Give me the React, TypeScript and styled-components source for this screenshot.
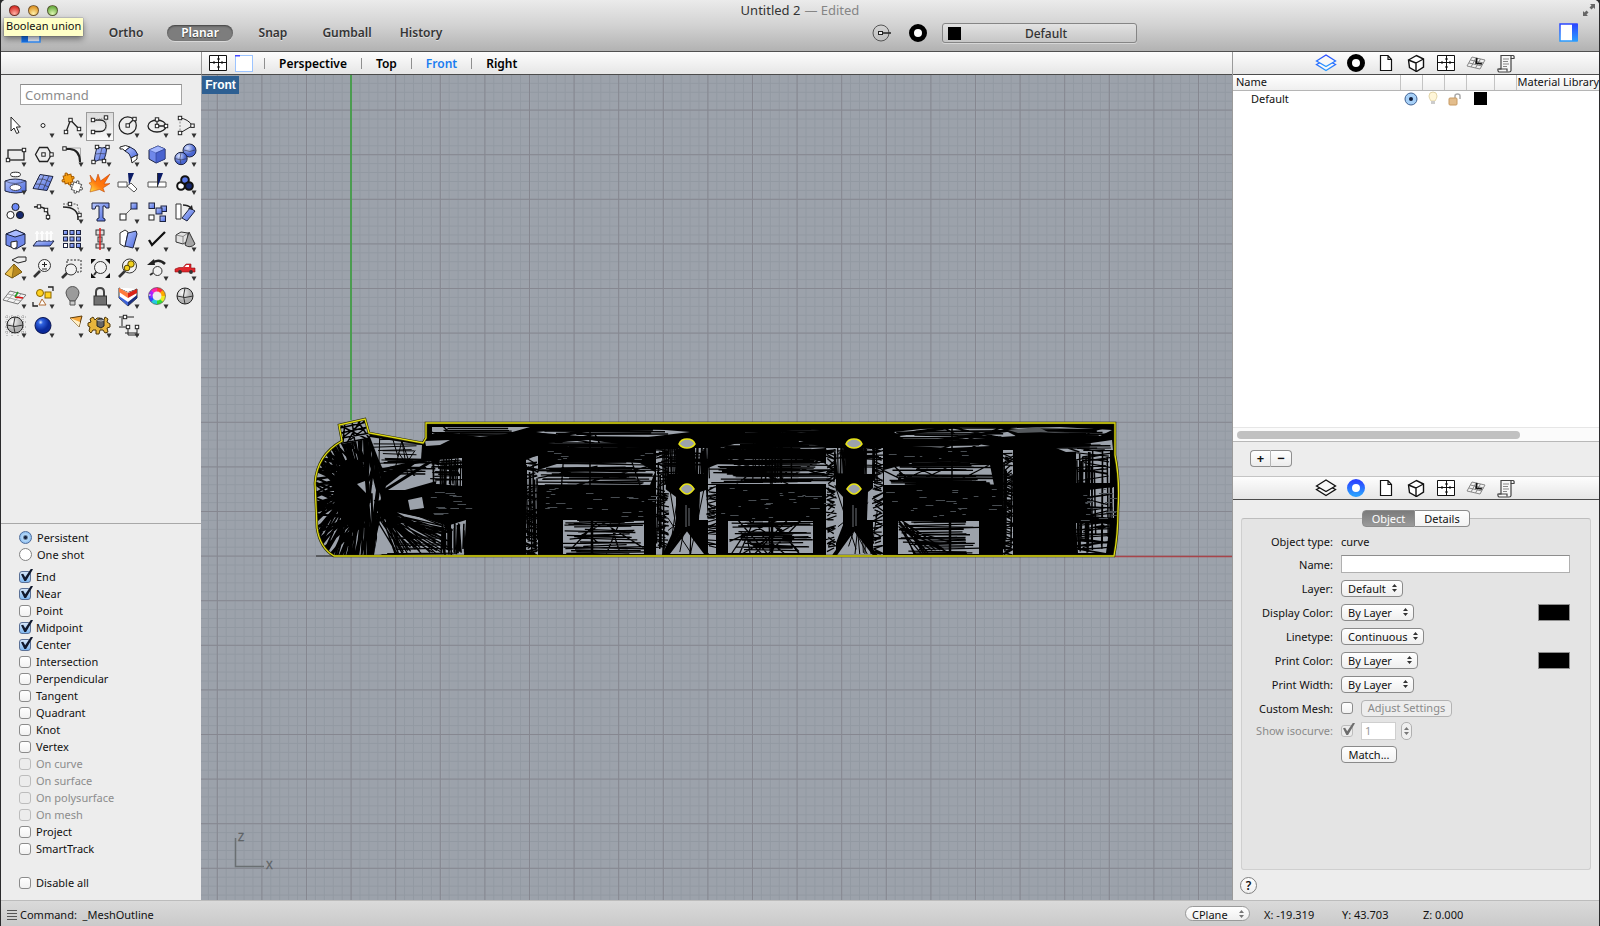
import React from 'react';
import styled, { createGlobalStyle, css } from 'styled-components';

const GlobalStyle = createGlobalStyle`
  *, *::before, *::after { box-sizing: border-box; }
  html, body { margin: 0; padding: 0; background: #2b2b2d; }
  body, button, input, select { font-family: "Noto Sans", "Open Sans", sans-serif; font-size: 11px; color: #111; }
  button, input, select { margin: 0; padding: 0; }
`;

const Window = styled.div`
  display: flex;
  flex-direction: column;
  height: 100vh;
  min-height: 900px;
  min-width: 1200px;
  margin: 0 1px;
  background: #ededed;
  border-radius: 5px 5px 0 0;
  overflow: hidden;
`;

/* ---------- title bar ---------- */

const TitleBar = styled.header`
  position: relative;
  flex: none;
  height: 52px;
  background: linear-gradient(#ebebeb, #d2d2d2 50%, #b2b2b2);
  border-bottom: 1px solid #515151;
`;

const TitleRow = styled.div`
  display: flex;
  justify-content: center;
  height: 20px;
  align-items: center;
  font-size: 13px;
  line-height: 20px;
  color: #333;
  gap: 4px;
`;

const Faded = styled.span`
  color: #858585;
`;

const Lights = styled.div`
  position: absolute;
  top: 5px;
  left: 8px;
  display: flex;
  gap: 8px;
`;

const Light = styled.button<{ $from: string; $to: string }>`
  width: 11px;
  height: 11px;
  border-radius: 50%;
  border: 1px solid rgba(60, 40, 30, 0.65);
  background: radial-gradient(circle at 50% 85%, ${(p) => p.$to}, ${(p) => p.$from} 75%);
`;

const Tooltip = styled.div`
  position: absolute;
  z-index: 3;
  top: 18px;
  left: 3px;
  height: 18px;
  padding: 0 2px;
  line-height: 16px;
  background: #ffffc7;
  box-shadow: 0 3px 6px rgba(0, 0, 0, 0.45), 0 0 1px rgba(0, 0, 0, 0.6);
`;

const ExpandButton = styled.button`
  position: absolute;
  top: 3px;
  right: 3px;
  width: 14px;
  height: 14px;
  border: 0;
  background: none;
`;

const ToolRow = styled.div`
  display: flex;
  align-items: center;
  height: 26px;
  padding: 0 20px;
`;

const SideToggle = styled.button`
  width: 20px;
  height: 20px;
  border: 0;
  background: none;
  & > svg { display: block; }
`;

const ModeGroup = styled.nav`
  display: flex;
  gap: 6px;
  margin-left: 50px;
`;

const ModeButton = styled.button<{ $on?: boolean; $w: number }>`
  width: ${(p) => p.$w}px;
  height: 16px;
  border: 0;
  border-radius: 8px;
  background: none;
  font-size: 12px;
  font-weight: 600;
  line-height: 16px;
  color: #353535;
  text-shadow: 0 1px 0 rgba(255, 255, 255, 0.5);
  ${(p) =>
    p.$on &&
    css`
      background: #7d7d7d;
      color: #fff;
      text-shadow: 0 1px 1px rgba(0, 0, 0, 0.5);
      box-shadow: inset 0 1px 2px rgba(0, 0, 0, 0.5), 0 1px 0 rgba(255, 255, 255, 0.4);
    `}
`;

const LayerGroup = styled.div`
  display: flex;
  align-items: center;
  gap: 12px;
  margin-left: 415px;
`;

const GlyphButton = styled.button`
  display: flex;
  align-items: center;
  justify-content: center;
  width: 24px;
  height: 20px;
  border: 0;
  background: none;
`;

const LayerButton = styled.button`
  display: flex;
  align-items: center;
  width: 195px;
  height: 20px;
  padding: 0 5px;
  border: 1px solid #858585;
  border-radius: 3px;
  background: linear-gradient(#e2e2e2, #c6c6c6);
  box-shadow: 0 1px 0 rgba(255, 255, 255, 0.4);
  font-size: 12px;
  font-weight: 500;
  color: #333;
  & > span { flex: 1; text-align: center; }
`;

const Swatch = styled.i`
  display: inline-block;
  width: 13px;
  height: 13px;
  background: #000;
`;

const Push = styled.div`
  margin-left: auto;
`;

/* ---------- body ---------- */

const Body = styled.main`
  flex: 1;
  min-height: 0;
  display: grid;
  grid-template-columns: 200px minmax(0, 1fr) 367px;
`;

const Column = styled.section`
  display: flex;
  flex-direction: column;
  min-width: 0;
  min-height: 0;
`;

const RightColumn = styled(Column)`
  border-left: 1px solid #9a9a9a;
`;

const Strip = styled.div`
  flex: none;
  display: flex;
  align-items: center;
  height: 23px;
  background: linear-gradient(#fdfdfd, #e6e6e6);
  border-bottom: 1px solid #4c4c4c;
`;

const IconStrip = styled(Strip)`
  justify-content: center;
  gap: 6px;
`;

const ViewStrip = styled(Strip)`
  border-left: 1px solid #9a9a9a;
  padding-left: 4px;
`;

const ViewTab = styled.button<{ $on?: boolean }>`
  height: 20px;
  border: 0;
  background: none;
  padding: 0 14px;
  font-size: 12px;
  font-weight: 600;
  color: ${(p) => (p.$on ? '#1a7cf0' : '#000')};
`;

const Divider = styled.i`
  width: 1px;
  height: 11px;
  background: #8f8f8f;
`;

const ViewIcons = styled.div`
  display: flex;
  gap: 2px;
  padding-right: 8px;
`;

/* ---------- left panel ---------- */

const CommandInput = styled.input`
  flex: none;
  height: 21px;
  margin: 9px 19px 7px;
  padding: 0 4px;
  border: 1px solid #a3a3a3;
  border-top-color: #8a8a8a;
  background: #fff;
  font-size: 13px;
  &::placeholder { color: #8c8c8c; opacity: 1; }
`;

const Palette = styled.div`
  display: grid;
  grid-template-columns: repeat(7, 1fr);
  grid-template-rows: repeat(8, 1fr);
  height: 228px;
  margin-right: 2px;
`;

const ToolButton = styled.button<{ $on?: boolean }>`
  display: flex;
  align-items: center;
  justify-content: center;
  border: 1px solid ${(p) => (p.$on ? '#9b9b9b' : 'transparent')};
  background: ${(p) => (p.$on ? 'linear-gradient(#dcdcdc, #fafafa)' : 'none')};
  min-width: 0;
  min-height: 0;
  overflow: hidden;
  & > svg { flex: none; }
`;

const Osnap = styled.div`
  flex: none;
  margin-top: auto;
  padding: 5px 18px 9px;
  border-top: 1px solid #a8a8a8;
`;

const Option = styled.label<{ $off?: boolean }>`
  display: flex;
  align-items: center;
  gap: 5px;
  height: 17px;
  line-height: 17px;
  color: ${(p) => (p.$off ? '#8c8c8c' : '#111')};
`;

const OptionGroup = styled.div<{ $gap: number }>`
  margin-bottom: ${(p) => p.$gap}px;
`;

const Check = styled.input.attrs({ type: 'checkbox' })`
  appearance: none;
  position: relative;
  flex: none;
  width: 12px;
  height: 12px;
  border: 1px solid #8b8b8b;
  border-radius: 3px;
  background: linear-gradient(#fff, #f1f1f1);
  &:checked { border-color: #5a7096; background: linear-gradient(#d5e6f9, #7fb7f0); }
  &:checked::after {
    content: '';
    position: absolute;
    left: 1px;
    top: -3px;
    width: 12px;
    height: 13px;
    background: #10182c;
    clip-path: polygon(0 45%, 18% 40%, 35% 68%, 84% 0, 100% 6%, 42% 96%, 28% 96%);
  }
  &:disabled { border-color: #bcbcbc; background: #ececec; }
  &:disabled::after { background: #6d6d6d; }
`;

const Radio = styled.input.attrs({ type: 'radio' })`
  appearance: none;
  flex: none;
  width: 13px;
  height: 13px;
  border: 1px solid #828282;
  border-radius: 50%;
  background: #fff;
  &:checked {
    border-color: #4c6c9c;
    background: radial-gradient(circle, #16223c 0 1px, #b4d8f8 3px, #8abcf0 6px);
  }
`;

/* ---------- viewport ---------- */

const Viewport = styled.div`
  position: relative;
  flex: 1;
  min-height: 0;
  background: #9ca2ab;
  overflow: hidden;
  & > svg { display: block; }
`;

const ViewLabel = styled.div`
  position: absolute;
  top: 1px;
  left: 1px;
  width: 37px;
  height: 18px;
  line-height: 18px;
  text-align: center;
  background: #2d5f92;
  color: #fff;
  font-family: "Liberation Sans", sans-serif;
  font-size: 12px;
  font-weight: 700;
`;

/* ---------- right panel ---------- */

const LayerList = styled.div`
  height: 352px;
  background: #fff;
  overflow: hidden;
`;

const LayerTable = styled.table`
  width: 100%;
  table-layout: fixed;
  border-collapse: collapse;
  th {
    height: 15px;
    padding: 0 0 0 3px;
    line-height: 14px;
    font-weight: 400;
    text-align: left;
    white-space: nowrap;
    background: linear-gradient(#fff, #efefef);
    border-bottom: 1px solid #b5b5b5;
    border-left: 1px solid #c4c4c4;
  }
  th:first-child { border-left: 0; }
  th:last-child { padding-left: 1px; }
  td { height: 17px; padding: 0; line-height: 15px; text-align: center; vertical-align: middle; }
  td:first-child { text-align: left; padding-left: 18px; }
  td > svg, td > i { display: block; margin: 0 auto; }
`;

const ScrollTrack = styled.div`
  height: 15px;
  padding: 3px 4px;
  background: #fbfbfb;
  border-top: 1px solid #e6e6e6;
  border-bottom: 1px solid #b8b8b8;
`;

const ScrollThumb = styled.div`
  width: 79%;
  height: 8px;
  border-radius: 4px;
  background: #c1c1c1;
`;

const AddRow = styled.div`
  display: flex;
  height: 35px;
  padding: 8px 17px;
  border-bottom: 1px solid #c4c4c4;
`;

const AddButton = styled.button`
  width: 21px;
  height: 17px;
  border: 1px solid #8f8f8f;
  background: linear-gradient(#fff, #ececec);
  line-height: 13px;
  font-size: 13px;
  font-weight: 700;
  &:first-child { border-radius: 4px 0 0 4px; border-right-color: #b5b5b5; }
  &:last-child { border-radius: 0 4px 4px 0; border-left: 0; }
`;

const Inspector = styled.div`
  position: relative;
  flex: 1;
  display: flex;
  flex-direction: column;
  padding: 18px 8px 0;
  background: #ededed;
`;

const Segments = styled.div`
  position: absolute;
  top: -9px;
  left: 0;
  right: 0;
  display: flex;
  justify-content: center;
`;

const Segment = styled.button<{ $on?: boolean }>`
  width: ${(p) => (p.$on ? 53 : 55)}px;
  height: 17px;
  line-height: 14px;
  border: 1px solid #8c8c8c;
  border-radius: ${(p) => (p.$on ? '4px 0 0 4px' : '0 4px 4px 0')};
  border-left-width: ${(p) => (p.$on ? 1 : 0)}px;
  background: ${(p) => (p.$on ? 'linear-gradient(#7b7b7b, #9a9a9a)' : 'linear-gradient(#fff, #f2f2f2)')};
  color: ${(p) => (p.$on ? '#fff' : '#111')};
`;

const Box = styled.div`
  position: relative;
  flex: 1;
  margin-bottom: 7px;
  padding: 11px 20px 0 0;
  background: #e4e4e4;
  border: 1px solid #cfcfcf;
  border-top-color: #bdbdbd;
  border-radius: 3px;
`;

const FieldRow = styled.div<{ $h?: number }>`
  display: flex;
  align-items: center;
  height: ${(p) => p.$h || 24}px;
`;

const FieldLabel = styled.label<{ $off?: boolean }>`
  width: 91px;
  margin-right: 8px;
  text-align: right;
  white-space: nowrap;
  color: ${(p) => (p.$off ? '#8a8a8a' : '#111')};
`;

const TextBox = styled.input<{ $w?: number }>`
  ${(p) => (p.$w ? `width: ${p.$w}px; margin-left: 8px;` : 'flex: 1; min-width: 0;')}
  height: 18px;
  padding: 0 3px;
  border: 1px solid #b0b0b0;
  border-top-color: #8d8d8d;
  background: #fff;
  &:disabled { color: #999; border-color: #cfcfcf; }
`;

const SelectWrap = styled.span<{ $w: number; $round?: boolean }>`
  position: relative;
  display: inline-flex;
  width: ${(p) => p.$w}px;
  height: ${(p) => (p.$round ? 15 : 17)}px;
  select {
    appearance: none;
    width: 100%;
    padding: 0 0 0 6px;
    border: 1px solid ${(p) => (p.$round ? '#9a9a9a' : '#8a8a8a')};
    border-radius: ${(p) => (p.$round ? 8 : 4)}px;
    background: linear-gradient(#fff, #efefef);
  }
  svg { position: absolute; right: 6px; top: calc(50% - 4px); pointer-events: none; }
`;

const PushButton = styled.button<{ $w: number }>`
  width: ${(p) => p.$w}px;
  height: 17px;
  line-height: 14px;
  border: 1px solid #8a8a8a;
  border-radius: 4px;
  background: linear-gradient(#fff, #f1f1f1);
  &:disabled { margin-left: 8px; color: #8a8a8a; border-color: #b3b3b3; background: #ededed; }
`;

const ColorWell = styled.button`
  width: 32px;
  height: 17px;
  margin-left: auto;
  border: 1px solid #8e8e8e;
  background: #000;
`;

const Stepper = styled.button`
  display: flex;
  align-items: center;
  justify-content: center;
  width: 11px;
  height: 18px;
  margin-left: 5px;
  border: 1px solid #b0b0b0;
  border-radius: 5px;
  background: #efefef;
`;

const HelpButton = styled.button`
  flex: none;
  width: 17px;
  height: 17px;
  margin: 0 0 6px -1px;
  border: 1px solid #808080;
  border-radius: 50%;
  background: linear-gradient(#fff, #efefef);
  font-size: 12px;
  line-height: 14px;
  font-weight: 600;
`;

/* ---------- status bar ---------- */

const StatusBar = styled.footer`
  flex: none;
  display: flex;
  align-items: center;
  height: 26px;
  padding: 1px 0 0 6px;
  border-top: 1px solid #bcbcbc;
  background: linear-gradient(#dadada, #cacaca);
`;

const StatusText = styled.span`
  margin-left: 3px;
  white-space: pre;
`;

const Coords = styled.div`
  display: grid;
  grid-template-columns: 78px 81px 1fr;
  width: 335px;
  margin-left: 14px;
`;

/* ---------- artwork ---------- */

const Sq = ({ x, y }: { x: number; y: number }) => (
  <rect x={x - 1.7} y={y - 1.7} width="3.4" height="3.4" fill="#fff" stroke="#222" strokeWidth="1" />
);

const K = { fill: 'none', stroke: '#222', strokeWidth: 1.3 } as const;
const B = { stroke: '#1c2340', strokeWidth: 1 } as const;

type Tool = [label: string, menu: boolean, art: React.ReactNode];

const puzzle = 'M-4-4h2.500c-1.500-3 3.500-3 2 0H4v3c3-1.500 3 3.500 0 2V4H1.500c1.500 3-3.500 3-2 0H-4V1.500c-3 1.500-3-3.500 0-2z';

const tools: Tool[] = [
  ['Select', false, <path d="M10 5l0 14 3-3 2.600 5.500 2.400-1-2.600-5.500 4 0z" fill="#fff" stroke="#222" />],
  ['Point', true, <circle cx="14" cy="13.500" r="2" fill="#fff" stroke="#222" />],
  ['Polyline', true, <><path d="M8 20L12.500 8 21 17" {...K} /><Sq x={8} y={20} /><Sq x={12.500} y={8} /><Sq x={21} y={17} /></>],
  ['Curve', true, <><path d="M7 8h7C22 8 22 19.500 14 19.500H7" {...K} /><path d="M7 8L20 5.500v13" fill="none" stroke="#999" strokeDasharray="1 1" /><Sq x={7} y={8} /><Sq x={20} y={5.500} /><Sq x={7} y={20} /></>],
  ['Circle', true, <><circle cx="13.700" cy="13.500" r="8.600" {...K} /><path d="M14 13l6-6" {...K} /><Sq x={13.700} y={13.500} /><Sq x={20.500} y={7} /></>],
  ['Ellipse', true, <><ellipse cx="14" cy="14" rx="9" ry="6" {...K} /><path d="M14 8v6h8" {...K} /><Sq x={14} y={14} /><Sq x={14} y={7.500} /><Sq x={23} y={14} /></>],
  ['Arc', true, <><path d="M9 6Q17 7 21.500 13.700L9 21" fill="none" stroke="#222" /><path d="M9 6v15" stroke="#888" strokeDasharray="2 1.500" /><Sq x={9} y={6} /><Sq x={21.500} y={13.700} /><Sq x={9} y={21} /></>],

  ['Rectangle', true, <><rect x="7" y="9" width="16" height="10" {...K} /><Sq x={7} y={19} /><Sq x={23} y={9} /></>],
  ['Polygon', true, <><path d="M10.500 6.500h8l4 7-4 7h-8l-4-7z" {...K} /><Sq x={14.500} y={13.500} /><Sq x={22.500} y={13.500} /></>],
  ['Fillet', true, <><path d="M7 7h15.500v15" fill="none" stroke="#aaa" /><path d="M7 8h5q10 1 10 13" fill="none" stroke="#222" strokeWidth="2" /><Sq x={6.500} y={7.500} /></>],
  ['Surface', true, <><path d="M11 6q5 2 10 0-1 8-3 13-5-1-10 2 1-8 3-15z" fill="url(#blue)" {...B} /><path d="M10 13q5-1 10 0M16 7l-3 12" fill="none" stroke="#334" strokeWidth=".6" /><Sq x={11} y={6} /><Sq x={21.500} y={6} /><Sq x={18} y={20} /><Sq x={7.500} y={21} /></>],
  ['Sweep', true, <><path d="M6 6Q12 3 16 6L11 10Q9 7 6 8z" fill="#fff" stroke="#222" /><path d="M16 6q6 2 8 8l-7 3q-1-5-6-7z" fill="url(#blue)" {...B} /><path d="M17 17l6-3v4l-5 4z" fill="#fff" stroke="#222" /></>],
  ['Box', true, <><path d="M6 9l9-4 7 3v10l-9 4-7-4z" fill="#6f88ea" {...B} /><path d="M6 9l7 3 9-4-7-3z" fill="#a5b8ff" stroke="#4a5fb5" strokeWidth=".6" /><path d="M13 12v10l9-4V8z" fill="#4a63cf" stroke="#2a3b8a" strokeWidth=".6" /></>],
  ['Boolean union', true, <><circle cx="18.500" cy="9.500" r="6.500" fill="url(#ball)" {...B} /><circle cx="10" cy="17.500" r="6.200" fill="url(#ball)" {...B} /><path d="M4 17.500q6 3 12 0M10 11.500q-2 6 0 12M13 9q6 3 11 0" fill="none" stroke="#334" strokeWidth=".6" /></>],

  ['Cylinder', true, <><ellipse cx="14.500" cy="5.500" rx="5" ry="2.300" fill="#fff" stroke="#222" /><path d="M4 12q10-4 21 0v10q-10 4-21 0z" fill="url(#blue)" {...B} /><path d="M4 12q10 5 21 0" fill="none" stroke="#334" strokeWidth=".6" /><ellipse cx="14.500" cy="18.500" rx="5.500" ry="3" fill="#fff" stroke="#445" /></>],
  ['Surface tools', true, <><path d="M11 5.500l13 2-6 14-14-2z" fill="url(#blue)" {...B} /><path d="M8.500 10q6-1 13 3M6.500 15q7-1 13 3M15 6l-6 14M20 7l-6 14" fill="none" stroke="#334" strokeWidth=".7" /></>],
  ['Join', false, <><path d={puzzle} transform="translate(10 10) rotate(-15)" fill="#f7a012" stroke="#a75b00" /><path d={puzzle} transform="translate(18.500 18) rotate(20)" fill="#fff" stroke="#555" /></>],
  ['Explode', false, <path d="M4 6l5.500 7L12 5l2.500 7L24 5l-6 10 6-.5-7 4.500 1.500 4-5-2.500L4 23l1.500-6L3 14l2.500-1z" fill="url(#fire)" stroke="#b33c00" strokeWidth=".5" />],
  ['Trim', false, <><path d="M4 13h9v5H4z" fill="#fff" stroke="#555" /><path d="M13 17l4-3 6 6-3 3z" fill="#fff" stroke="#555" /><path d="M14 4h6l-5 12z" fill="#0c1c66" /></>],
  ['Split', false, <><path d="M5 13h18v5H5z" fill="#fff" stroke="#555" /><path d="M14 4h6l-5 13z" fill="#0c1c66" /><path d="M14.500 4v14" stroke="#333" /></>],
  ['Group', true, <g stroke="#111" strokeWidth="2"><circle cx="10" cy="17" r="3.800" fill="#fff" /><circle cx="14" cy="11" r="3.800" fill="#5a78e8" /><circle cx="18" cy="17" r="3.800" fill="#16286e" /></g>],

  ['Ungroup', false, <g stroke="#222"><circle cx="14.500" cy="9" r="3.600" fill="#6b88f5" /><circle cx="9.500" cy="17" r="3.600" fill="#fff" /><circle cx="19" cy="17" r="3.600" fill="#16286e" /></g>],
  ['Edit points', false, <><path d="M5 9q16-2 14 13" {...K} strokeWidth={1.600} /><Sq x={10} y={8.500} /><Sq x={17} y={12} /><Sq x={19} y={19} /></>],
  ['Rebuild', true, <><path d="M5 9q16 0 15 13" {...K} strokeWidth={1.600} /><path d="M5 6h14l3 12" fill="none" stroke="#555" strokeDasharray="2 1.500" /><Sq x={12} y={6} /><Sq x={21.500} y={17} /></>],
  ['Text', false, <path d="M6 5h17v5h-3l-1-2h-2v12l2 1v2h-8v-2l2-1V8h-3l-1 3H6z" fill="url(#blue)" {...B} />],
  ['Move', true, <><path d="M9 19L19 9" stroke="#222" strokeDasharray="2 1" /><rect x="6" y="16" width="6" height="6" fill="#fff" stroke="#222" /><rect x="17" y="5" width="6" height="6" fill="url(#blue)" {...B} /></>],
  ['Copy', false, <><g fill="url(#blue)" {...B}><rect x="6" y="5" width="5.500" height="5.500" /><rect x="18" y="8" width="5.500" height="5.500" /><rect x="13" y="10" width="6" height="6" /><rect x="17" y="18" width="5.500" height="5.500" /></g><rect x="6" y="17" width="5" height="5" fill="#fff" stroke="#222" /></>],
  ['Rotate', false, <><path d="M5 6h5v15H5z" fill="#fff" stroke="#333" /><path d="M19 10l5 3-8 10-5-3z" fill="url(#blue)" {...B} /><path d="M12 7q5 0 8 3" {...K} /><path d="M21 7l1 5-5-1z" fill="#222" /></>],

  ['Solid tools', true, <><path d="M5 8l10-4 9 4v10l-9 5-10-4z" fill="#6f88ea" {...B} /><path d="M5 8l10-4 9 4-10 3z" fill="#a9bbff" {...B} /><path d="M10 16l6-1v6l-3 2-3-2z" fill="#fff" stroke="#222" /></>],
  ['Extrude', true, <><path d="M8 15h17l-4 5H4z" fill="url(#blue)" {...B} /><path d="M8 15V6m5 9V6m5 9V6m4 9V6" stroke="#fff" strokeWidth="1.600" /><path d="M6 8l2-3 2 3m1 0l2-3 2 3m1 0l2-3 2 3m0 0l2-3 2 3" fill="none" stroke="#fff" /></>],
  ['Array', true, <g fill="url(#blue)" {...B}>{[0, 1, 2].map((i) => [0, 1, 2].map((j) => <rect key={`${i}${j}`} x={5.500 + i * 6.500} y={4.500 + j * 6.500} width="4" height="4" fill={i === 0 && j === 2 ? '#fff' : undefined} />))}</g>],
  ['Align', true, <><g fill="#ddd" stroke="#333"><rect x="10" y="4" width="8" height="5" /><rect x="12" y="11" width="4" height="5" /><rect x="10" y="18" width="8" height="4" /></g><path d="M14 2v22" stroke="#e02020" strokeWidth="1.500" /></>],
  ['Orient', true, <><path d="M6 7l5-3 3 2-3 15-5-3z" fill="#fff" stroke="#333" /><path d="M14 7l8-2 1 3-4 14-8-2z" fill="url(#blue)" {...B} /></>],
  ['Check', true, <path d="M6 14l3 5 13-13" fill="none" stroke="#111" strokeWidth="2.300" />],
  ['Mesh', true, <><path d="M5 9l5-3 7 1v8l-5 3-7-2z" fill="#e2e2e2" stroke="#333" /><path d="M5 9l7 1.500L17 7M12 10.500V18" fill="none" stroke="#666" strokeWidth=".7" /><path d="M18 6l6 12q-5 5-10 1z" fill="#a5a5a5" stroke="#333" /></>],

  ['Render', true, <><path d="M4 19l9-10 8 8-10 6z" fill="#ecc04a" stroke="#6d5312" /><path d="M13 9l-2 14 10-6z" fill="#b98a20" stroke="#6d5312" strokeWidth=".6" /><path d="M11 5l6-3h8v4l-8 2z" fill="#eee" stroke="#222" /></>],
  ['Zoom', false, <><path d="M5 22l6-6" stroke="#333" strokeWidth="2.600" /><circle cx="15.500" cy="10.500" r="6" fill="#f4f4f4" stroke="#333" /><path d="M13 9.500h5M15.500 7v5M13 14h5" stroke="#222" /></>],
  ['Zoom window', false, <><rect x="9" y="5" width="14" height="12" fill="none" stroke="#222" strokeDasharray="2 1.500" /><path d="M4 23l5-5" stroke="#333" strokeWidth="2.600" /><circle cx="13" cy="14.500" r="5.500" fill="#f2f2f2" stroke="#333" /></>],
  ['Zoom extents', false, <><path d="M8 20l3-4" stroke="#333" strokeWidth="2" /><circle cx="14.500" cy="12.500" r="6" fill="#f2f2f2" stroke="#333" /><path d="M5 9V4h5zM19 4h5v5zM5 18v5h5zM24 18v5h-5z" fill="#111" /></>],
  ['Zoom selected', false, <><path d="M5 22l6-6" stroke="#333" strokeWidth="2.600" /><circle cx="15.500" cy="11" r="7" fill="#f2f2f2" stroke="#333" /><circle cx="17" cy="9" r="3.200" fill="#f2d21d" stroke="#554400" /><circle cx="13" cy="13" r="2.800" fill="#f2d21d" stroke="#554400" /></>],
  ['Undo view', true, <><path d="M7 20l3-2" stroke="#333" strokeWidth="2" /><circle cx="14.500" cy="16" r="4.500" fill="#f2f2f2" stroke="#333" /><path d="M22 9Q16 3 9 8" fill="none" stroke="#222" strokeWidth="2.500" /><path d="M4 10l7-6 1 6z" fill="#222" /></>],
  ['Named view', true, <><path d="M4 14l4-1.500h4l3-3.500h5v4h4v4H4z" fill="#e0262c" stroke="#8d1014" strokeWidth=".6" /><path d="M13.500 12l2-2h2.500v2z" fill="#fff" /><circle cx="9" cy="17" r="1.900" fill="#333" /><circle cx="20" cy="17" r="1.900" fill="#333" /></>],

  ['Construction plane', true, <><path d="M9 8l16 4-8 9-15-4z" fill="#f4f4f4" stroke="#777" /><path d="M7 11l16 4M5 14l15 4M14 9l-8 9M20 11l-8 9" stroke="#888" strokeWidth=".7" /><path d="M14 14l8 1" stroke="#d11" strokeWidth="1.600" /><path d="M14 14l3-5" stroke="#292" strokeWidth="1.600" /></>],
  ['Layout', true, <><circle cx="11" cy="10" r="3.500" fill="#ffd21f" stroke="#8a6500" /><rect x="16" y="9" width="6" height="6" fill="#ffd21f" stroke="#8a6500" /><path d="M13 16l4 6h-7z" fill="#fff" stroke="#b06a30" /><path d="M19 4h5v4M4 19v4h5" {...K} /></>],
  ['Hide', true, <><path d="M8 10a6.500 6.500 0 0 1 13 0q0 3-4 8h-5q-4-5-4-8z" fill="#9b9b9b" stroke="#555" /><path d="M12 18h5v4h-5z" fill="#ccc" stroke="#555" /></>],
  ['Lock', true, <><path d="M10 13V9q0-4 4-4t4 4v4" fill="none" stroke="#444" strokeWidth="2" /><rect x="8" y="13" width="12.500" height="9" fill="#707070" stroke="#333" /></>],
  ['Layers', true, <><path d="M5 5l9 4 9-3v9l-9 8-9-8z" fill="#fff" stroke="#333" /><path d="M5 5l9 4 8-3-8-1z" fill="#fff" /><path d="M5 5l9 5v5l-9-6z" fill="#ff7a3c" /><path d="M14 10l9-4v4l-9 5z" fill="#d92418" /><path d="M5 13l9 6v4l-9-8z" fill="#3c62d8" /><path d="M14 19l9-7v3l-9 8z" fill="#1a2e7c" /></>],
  ['Properties', true, <g fill="none" strokeWidth="4">{['#f33', '#fa0', '#ee2', '#3d3', '#2cd', '#34f', '#a2f', '#f2a'].map((c, i) => <circle key={c} cx="14" cy="13" r="6.500" stroke={c} pathLength="8" strokeDasharray="1.050 6.950" strokeDashoffset={-i} transform="rotate(-90 14 13)" />)}<circle cx="14" cy="13" r="8.500" stroke="#444" strokeWidth=".6" /></g>],
  ['Sphere', false, <><circle cx="14" cy="13" r="8" fill="url(#grey)" stroke="#222" /><path d="M6 13q8 3 16 0M14 5q-3 8 0 16" fill="none" stroke="#333" /></>],

  ['Shade', true, <><path d="M4 5h21M4 10h21M4 15h21M4 20h21M6 3v21M11 3v21M17 3v21M22 3v21" stroke="#999" strokeDasharray="1 1" /><circle cx="14" cy="13" r="8" fill="url(#grey)" stroke="#222" /><path d="M6 13q8 3 16 0M14 5q-3 8 0 16" fill="none" stroke="#333" /></>],
  ['Rendered', true, <circle cx="14" cy="13.500" r="8" fill="url(#deep)" stroke="#0a1550" />],
  ['Spotlight', true, <><path d="M12 6l12-2-3 11z" fill="#f7a83a" stroke="#5d3b09" /><path d="M12 6l9 9 1-5z" fill="#fff0c8" /></>],
  ['Options', true, <><path d="M11 6h3l1 3 3-1 1-3 3 2-1 3 3 2v3l-3 1 1 4-3 1-2-3h-3l-1 4h-3l0-4-3 0-2 3-2-2 1-4-2-1v-3l3-1-1-3 3-2 2 3z" fill="#e8b53c" stroke="#4b3508" /><path d="M11 8l4-2 3 2v6l-3 2-4-2z" fill="#666" stroke="#222" /><path d="M11 8l4 1 3-1" fill="none" stroke="#bbb" /></>],
  ['Dimension', true, <><path d="M5 5h15M5 15h7M8 6v8M14 15v8h11M23 16v6M11 21h12" fill="none" stroke="#222" /><Sq x={11} y={5} /><Sq x={14} y={15} /><Sq x={23} y={15} /></>],
];

const Defs = () => (
  <svg width="0" height="0" style={{ display: 'block' }} aria-hidden="true">
    <defs>
      <linearGradient id="blue" x1="0" y1="0" x2="1" y2="1"><stop offset="0" stopColor="#b8c8ff" /><stop offset="1" stopColor="#4a68dd" /></linearGradient>
      <radialGradient id="ball" cx=".35" cy=".3"><stop offset="0" stopColor="#dde6ff" /><stop offset="1" stopColor="#4a66d0" /></radialGradient>
      <radialGradient id="grey" cx=".35" cy=".3"><stop offset="0" stopColor="#fff" /><stop offset="1" stopColor="#b0b0b0" /></radialGradient>
      <radialGradient id="deep" cx=".35" cy=".3"><stop offset="0" stopColor="#cfe0ff" /><stop offset=".3" stopColor="#2f62e0" /><stop offset="1" stopColor="#0a2a9c" /></radialGradient>
      <linearGradient id="fire" x1="1" y1="0" x2="0" y2="1"><stop offset="0" stopColor="#ff5a00" /><stop offset=".6" stopColor="#ff7d10" /><stop offset="1" stopColor="#ffe94a" /></linearGradient>
      <linearGradient id="active" x1="0" y1="0" x2="0" y2="1"><stop offset="0" stopColor="#2b46ff" /><stop offset="1" stopColor="#2a9cff" /></linearGradient>
    </defs>
  </svg>
);

const GridIcon = () => (
  <svg width="20" height="18" viewBox="0 0 20 18" fill="none" stroke="#111">
    <path d="M1.500 1.500h17v15h-17zM10.500 1.500v15M1.500 8.500h17" fill="#fff" />
    <path d="M6 7v3M14 7v3M9 5h3M9 13h3" />
  </svg>
);

const Ring = ({ active }: { active?: boolean }) => (
  <svg width="20" height="20" viewBox="0 0 20 20"><circle cx="10" cy="10" r="6.500" fill="#fff" stroke={active ? 'url(#active)' : '#000'} strokeWidth="5" /></svg>
);

const PanelIcons = ({ active }: { active: 'layers' | 'object' }) => {
  const line = active === 'layers' ? 'url(#active)' : '#111';
  return (
    <>
      <GlyphButton aria-label="Layers">
        <svg width="22" height="18" viewBox="0 0 22 18" fill="#f8f8f8" stroke={line} strokeWidth="1.300"><path d="M1.500 10.500l9.500-5 9.500 5-9.500 6z" /><path d="M1.500 7l9.500-6 9.500 6-9.500 5.500z" /></svg>
      </GlyphButton>
      <GlyphButton aria-label="Object"><Ring active={active === 'object'} /></GlyphButton>
      <GlyphButton aria-label="Document">
        <svg width="14" height="18" viewBox="0 0 14 18" fill="#fff" stroke="#111" strokeWidth="1.200"><path d="M1.500 1.500h7.500l3.500 4v11h-11zM9 1.500v4h3.500" /></svg>
      </GlyphButton>
      <GlyphButton aria-label="Blocks">
        <svg width="18" height="18" viewBox="0 0 18 18" fill="#fff" stroke="#111" strokeWidth="1.400"><path d="M1.500 6l8-4.500 7 3.500v8l-7 4.500-7-4z" /><path d="M1.500 6l7.500 3v8.500M9 9l7.500-4" fill="none" /></svg>
      </GlyphButton>
      <GlyphButton aria-label="Viewports"><GridIcon /></GlyphButton>
      <GlyphButton aria-label="Planes">
        <svg width="20" height="14" viewBox="0 0 20 14" fill="none" stroke="#888"><path d="M6 1l13 3-5 9-13-3z" fill="#f1f1f1" /><path d="M4.500 4l13 3M3 7l13 3M10 2l-5 9M14.500 3l-5 9" /><path d="M11 2l-1 5 6 1" stroke="#111" strokeWidth="1.600" /></svg>
      </GlyphButton>
      <GlyphButton aria-label="Notes">
        <svg width="18" height="19" viewBox="0 0 18 19" fill="#f7f7f7" stroke="#444" strokeWidth="1.200"><path d="M4 1.500h12q1.500 0 1 3h-3v12q0 1.500-2 1.500H2q-1.500-1-1-3h3z" /><path d="M1.500 15h8.500v2.500M14 4.500V2" fill="none" /><path d="M6 5h6M6 7.500h5M6 10h6M6 12.500h4" stroke="#888" /></svg>
      </GlyphButton>
    </>
  );
};

/* ---------- wireframe model ---------- */

const BASE = '#9ca2ab';

const seeded = (seed: number) => {
  let s = seed;
  return () => {
    s = (s * 16807) % 2147483647;
    return s / 2147483647;
  };
};

type Kind = 'h' | 'v' | 'x' | 'mix' | 'fan';
type Region = { x: number; y: number; w: number; h: number; n: number; kind: Kind; t?: number };

const hatch = ({ x, y, w, h, n, kind }: Region, seed: number) => {
  const r = seeded(seed * 7919 + 13);
  let d = '';
  for (let i = 0; i < n; i++) {
    const k = kind === 'mix' ? (r() < 0.82 ? 'h' : 'x') : kind;
    const a = r();
    const b = r();
    const c = r();
    const e = r();
    if (k === 'h') d += `M${x + a * w * 0.3} ${y + b * h}L${x + w - c * w * 0.3} ${y + Math.min(1, Math.max(0, b + (e - 0.5) * 0.12)) * h}`;
    else if (k === 'v') d += `M${x + a * w} ${y + b * h * 0.3}L${x + a * w + (e - 0.5) * 4} ${y + h - c * h * 0.2}`;
    else if (k === 'fan') d += `M${x + a * w * 0.1} ${y + b * h * 0.3}L${x + w * (0.25 + 0.75 * c)} ${y + h * (1 - (1 - e) * c * 0.6)}`;
    else d += `M${x + a * w} ${y + (b < 0.5 ? 0 : b * 0.5) * h}L${x + c * w} ${y + (e < 0.5 ? h : e * h)}`;
  }
  return d;
};

/* Openings where the background shows through the mesh. */
const openings = [
  '370,437 422,445 421,460 384,472 378,458',
  '386,486 421,459 432,462 446,470 440,480 405,490 385,490',
  '380,522 398,512 424,518 444,525 458,555 374,555',
  '408,500 422,497 424,508 410,510',
  '432,427 530,427 505,434 480,437 446,432 432,434',
  '425,441 450,440 440,445 426,446',
  '536,432 586,428 640,428 690,432 640,438 560,436',
  '548,443 590,440 640,447 580,448',
  '538,470 560,463 600,461 640,463 655,472 650,485 538,485',
  '563,520 644,520 644,554 563,554',
  '664,488 676,497 676,525 664,551',
  '700,492 706,490 708,520 699,520',
  '686,526 707,554 666,554',
  '720,448 745,441 800,441 826,448 800,450 740,450',
  '745,429 770,427 820,430 800,433 745,433',
  '708,468 730,459 815,459 834,468 834,484 708,484',
  '728,521 813,521 813,553 728,553',
  '834,487 843,497 843,525 834,548',
  '868,492 877,485 878,520 867,520',
  '853,526 875,555 834,555',
  '894,432 940,427 1000,428 1016,436 970,439 905,440',
  '912,446 954,440 990,446 950,448',
  '884,470 910,463 950,461 990,465 994,485 884,485',
  '898,521 979,521 979,554 898,554',
  '1010,428 1060,427 1112,430 1100,436 1040,432',
  '1056,448 1112,440 1113,450 1066,452',
  '1076,449 1110,449 1110,483 1076,483',
  '1076,523 1110,523 1106,553 1078,553',
  '1088,490 1114,487 1114,518 1092,516',
  '526,460 538,455 538,555 526,555',
  '1003,450 1013,450 1013,555 1003,555',
  '826,448 836,448 836,555 826,555',
  '708,485 716,485 716,554 708,554',
  '656,448 668,448 662,555 656,555',
  '873,448 883,448 883,555 873,555',
  '664,448 708,448 706,474 668,474',
  '834,448 876,448 874,474 838,474',
  '440,458 462,458 462,486 436,484',
  '450,525 466,520 464,555 452,555',
];

const regions: Region[] = [
  { x: 370, y: 438, w: 54, h: 26, n: 9, kind: 'h' },
  { x: 374, y: 436, w: 46, h: 40, n: 7, kind: 'x' },
  { x: 378, y: 458, w: 62, h: 16, n: 10, kind: 'h', t: 1.400 },
  { x: 374, y: 500, w: 80, h: 56, n: 50, kind: 'fan', t: 1.300 },
  { x: 374, y: 530, w: 80, h: 26, n: 10, kind: 'h' },
  { x: 430, y: 456, w: 38, h: 34, n: 26, kind: 'h', t: 1.200 },
  { x: 430, y: 456, w: 38, h: 34, n: 20, kind: 'v', t: 1.300 },
  { x: 440, y: 520, w: 30, h: 36, n: 26, kind: 'v', t: 1.500 },
  { x: 430, y: 426, w: 110, h: 12, n: 14, kind: 'mix', t: 1.300 },
  { x: 536, y: 426, w: 150, h: 24, n: 20, kind: 'mix', t: 1.500 },
  { x: 536, y: 459, w: 126, h: 28, n: 34, kind: 'mix', t: 1.300 },
  { x: 562, y: 520, w: 84, h: 34, n: 36, kind: 'mix', t: 1.300 },
  { x: 524, y: 455, w: 15, h: 100, n: 76, kind: 'h', t: 1.300 },
  { x: 524, y: 455, w: 15, h: 100, n: 7, kind: 'v', t: 1.600 },
  { x: 655, y: 448, w: 14, h: 106, n: 56, kind: 'h', t: 1.300 },
  { x: 655, y: 448, w: 8, h: 106, n: 4, kind: 'v', t: 1.500 },
  { x: 664, y: 440, w: 44, h: 48, n: 50, kind: 'v', t: 1.300 },
  { x: 656, y: 448, w: 52, h: 40, n: 20, kind: 'h', t: 1.100 },
  { x: 664, y: 485, w: 44, h: 69, n: 12, kind: 'x' },
  { x: 708, y: 426, w: 128, h: 26, n: 50, kind: 'mix', t: 1.300 },
  { x: 750, y: 426, w: 44, h: 58, n: 18, kind: 'v', t: 1.200 },
  { x: 706, y: 456, w: 130, h: 28, n: 44, kind: 'mix', t: 1.300 },
  { x: 728, y: 520, w: 86, h: 34, n: 40, kind: 'mix', t: 1.300 },
  { x: 706, y: 486, w: 12, h: 68, n: 40, kind: 'h', t: 1.200 },
  { x: 825, y: 450, w: 12, h: 104, n: 56, kind: 'h', t: 1.300 },
  { x: 834, y: 440, w: 44, h: 48, n: 50, kind: 'v', t: 1.300 },
  { x: 834, y: 448, w: 50, h: 40, n: 20, kind: 'h', t: 1.100 },
  { x: 834, y: 485, w: 44, h: 69, n: 12, kind: 'x' },
  { x: 884, y: 426, w: 134, h: 24, n: 20, kind: 'mix', t: 1.500 },
  { x: 882, y: 461, w: 118, h: 25, n: 32, kind: 'mix', t: 1.300 },
  { x: 898, y: 520, w: 82, h: 34, n: 26, kind: 'h', t: 1.300 },
  { x: 898, y: 518, w: 60, h: 40, n: 16, kind: 'fan', t: 1.300 },
  { x: 872, y: 448, w: 12, h: 106, n: 56, kind: 'h', t: 1.300 },
  { x: 1002, y: 450, w: 12, h: 105, n: 76, kind: 'h', t: 1.300 },
  { x: 1002, y: 450, w: 12, h: 105, n: 5, kind: 'v', t: 1.600 },
  { x: 1010, y: 426, w: 104, h: 26, n: 24, kind: 'mix', t: 1.400 },
  { x: 1074, y: 448, w: 40, h: 106, n: 22, kind: 'v', t: 1.500 },
  { x: 1074, y: 448, w: 40, h: 106, n: 50, kind: 'h', t: 1.200 },
];

const headRays = () => {
  const r = seeded(4242);
  let d = '';
  for (let i = 0; i < 150; i++) {
    const a = Math.PI * (0.4 + 1.2 * (i / 150));
    const cx = 360 + r() * 10;
    const cy = 470 + r() * 46;
    const inner = 4 + r() * 14;
    d += `M${cx + inner * Math.cos(a)} ${cy + inner * Math.sin(a)}L${364 + 64 * Math.cos(a + (r() - 0.5) * 0.1)} ${492 + 76 * Math.sin(a)}`;
  }
  return d;
};

/* Small see-through slits inside the dense parts. */
const slits = () => {
  const r = seeded(977);
  const fields = [
    [545, 488, 110, 30, 26], [712, 488, 112, 30, 26], [886, 488, 110, 30, 26],
    [430, 490, 36, 30, 14], [1080, 488, 32, 32, 20], [545, 450, 110, 10, 8], [886, 450, 110, 10, 8],
  ];
  let d = '';
  for (const [x, y, w, h, n] of fields)
    for (let i = 0; i < n; i++) d += `M${x + r() * w} ${Math.round(y + r() * h) + 0.5}h${2 + r() * 8}`;
  return d;
};

const OUTLINE =
  'M334 556Q320 548 317 528L315 483Q317 455 342 441L339 425 365 419 369 433 423 443 426 438 426 423 1115 423 1115 455Q1120 480 1118 510 1118 535 1114 556Z';

const Model = () => (
  <g>
    <clipPath id="body"><path d={OUTLINE} /></clipPath>
    <path d="M316 556H334" stroke="#222" />
    <g clipPath="url(#body)">
      <path d={OUTLINE} fill="#000" />
      <path d="M314 556V420H369L372 440 381 480V556Z" fill={BASE} />
      <path d={headRays()} stroke="#000" strokeWidth="2" />
      <ellipse cx="352" cy="492" rx="18" ry="34" fill="#000" />
      <path d="M357 484l8-3 1 12zM376 512l6 4-6 5z" fill={BASE} />
      <path d="M338 424L366 418 370 438 343 444Z" fill={BASE} />
      <path d="M340 428l27-6M341 433l27-6M342 438l28-5M343 443l27-5M345 422l-2 20M352 421l3 22M361 419l-14 24M341 426l28 14M366 420l-24 18M350 440l18-14M357 420l12 18" stroke="#000" strokeWidth="1.500" />
      <path d="M370 436L383 498 370 556M367 446L378 490 370 550" stroke="#000" strokeWidth="4" fill="none" />
      {openings.map((p) => (
        <polygon key={p} points={p} fill={BASE} />
      ))}
      <g stroke="#000" fill="none">
        {regions.map((g, i) => (
          <path key={i} d={hatch(g, i + 1)} strokeWidth={g.t || 1} />
        ))}
      </g>
      <g stroke="#000" fill="none" strokeWidth="3">
        <path d="M382 470L430 459M382 492L430 462M384 502L450 488M384 508L440 520" />
        <path d="M536 434L686 446M536 440L600 428M690 446L790 428M770 428L856 446M860 440L960 426M900 446L1010 430" />
        <path d="M590 426V486M772 426V484M952 426V486" strokeWidth="1.500" />
        <path d="M592 520V555M772 520V555M950 520V555" strokeWidth="2.500" />
        <path d="M687 528L666 556M687 528L708 556M854 528L834 556M854 528L876 556" strokeWidth="4" />
      </g>
      <path d="M679 448h16l2 50-4 40-6-10-6 10-4-40zM846 448h16l2 50-4 40-6-10-6 10-4-40z" fill="#000" />
      <path d="M686 505v22M689 508v18M853 505v22M856 508v18" stroke={BASE} strokeWidth=".7" />
      <path d={slits()} stroke="#474c51" strokeWidth="1" />
      <path d="M1008 430l30-3 10 5-30 1z" fill="#55595d" />
    </g>
    <path d={OUTLINE} fill="none" stroke="#2b2b00" strokeWidth="2.600" />
    <path d={OUTLINE} fill="none" stroke="#e0dc14" strokeWidth="1.300" />
    <g fill={BASE} stroke="#e6e216" strokeWidth="1.500">
      <path d="M679 444q2-5 8-5t8 5q-3 4-8 4t-8-4zM846 444q2-5 8-5t8 5q-3 4-8 4t-8-4z" />
      <path d="M680 489q3-5 7-5t7 5q-4 5-7 5t-7-5zM847 489q3-5 7-5t7 5q-4 5-7 5t-7-5z" />
    </g>
  </g>
);

const Scene = () => (
  <svg width="100%" height="100%" role="img" aria-label="Front view of a mesh model">
    <defs>
      <pattern id="minor" width="8.920" height="8.920" patternUnits="userSpaceOnUse" x="350.600" y="555.600">
        <path d="M0 .5H9M.5 0V9" stroke="#9299a2" strokeWidth="1" />
      </pattern>
      <pattern id="major" width="44.600" height="44.600" patternUnits="userSpaceOnUse" x="350.600" y="555.600">
        <path d="M0 .5H45M.5 0V45" stroke="#868790" strokeWidth="1" />
      </pattern>
    </defs>
    <g transform="translate(-201 -75)">
      <rect width="5000" height="3000" fill="url(#minor)" />
      <rect width="5000" height="3000" fill="url(#major)" />
      <path d="M351 0V420" stroke="#4b9c50" strokeWidth="2" />
      <path d="M1114 556.500H5000" stroke="#a8444a" strokeWidth="1.500" />
      <Model />
      <path d="M235.500 838V866.500H264" fill="none" stroke="#6a6f72" strokeWidth="1.500" />
      <text x="238" y="841" fontFamily="Liberation Sans" fontSize="10" fill="#5c6164" stroke="#5c6164" strokeWidth=".3">Z</text>
      <text x="266" y="869" fontFamily="Liberation Sans" fontSize="10" fill="#5c6164" stroke="#5c6164" strokeWidth=".3">X</text>
    </g>
  </svg>
);

/* ---------- form parts ---------- */

const Arrows = ({ tone = '#333' }: { tone?: string }) => (
  <svg width="5" height="8" viewBox="0 0 5 8" fill={tone}><path d="M0 3L2.500 0 5 3zM0 5l2.500 3L5 5z" /></svg>
);

const Select = ({ id, value, w }: { id: string; value: string; w: number }) => (
  <SelectWrap $w={w}>
    <select id={id} defaultValue={value}><option>{value}</option></select>
    <Arrows />
  </SelectWrap>
);

const snaps: [string, boolean, boolean][] = [
  ['End', true, false], ['Near', true, false], ['Point', false, false], ['Midpoint', true, false],
  ['Center', true, false], ['Intersection', false, false], ['Perpendicular', false, false],
  ['Tangent', false, false], ['Quadrant', false, false], ['Knot', false, false], ['Vertex', false, false],
  ['On curve', false, true], ['On surface', false, true], ['On polysurface', false, true],
  ['On mesh', false, true], ['Project', false, false], ['SmartTrack', false, false],
];

const selects: [string, string, number, boolean][] = [
  ['Layer:', 'Default', 62, false],
  ['Display Color:', 'By Layer', 73, true],
  ['Linetype:', 'Continuous', 83, false],
  ['Print Color:', 'By Layer', 77, true],
  ['Print Width:', 'By Layer', 73, false],
];

export default function App() {
  return (
    <>
      <GlobalStyle />
      <Defs />
      <Window>
        <TitleBar>
          <Lights>
            <Light aria-label="Close" $from="#d9322c" $to="#ffb0a4" />
            <Light aria-label="Minimize" $from="#e09a2c" $to="#fff0a8" />
            <Light aria-label="Zoom window" $from="#6fb046" $to="#dcf7b0" />
          </Lights>
          <Tooltip role="tooltip">Boolean union</Tooltip>
          <TitleRow>Untitled 2 <Faded>— Edited</Faded></TitleRow>
          <ExpandButton aria-label="Full screen">
            <svg width="14" height="14" viewBox="0 0 14 14" fill="#666"><path d="M8 1h5v5l-1.500-1.500L9.500 6.500l-2-2 2-2zM6 13H1V8l1.500 1.500 2-2 2 2-2 2z" /></svg>
          </ExpandButton>
          <ToolRow>
            <SideToggle aria-label="Left sidebar">
              <svg width="20" height="20"><rect x="1" y="2" width="18" height="17" fill="#e8eefc" stroke="#3391ff" strokeWidth="1.500" /><rect x="1" y="2" width="6" height="17" fill="#1976f0" /></svg>
            </SideToggle>
            <ModeGroup>
              <ModeButton $w={70}>Ortho</ModeButton>
              <ModeButton $w={66} $on>Planar</ModeButton>
              <ModeButton $w={68}>Snap</ModeButton>
              <ModeButton $w={68}>Gumball</ModeButton>
              <ModeButton $w={68}>History</ModeButton>
            </ModeGroup>
            <LayerGroup>
              <GlyphButton aria-label="History recording">
                <svg width="20" height="18" viewBox="0 0 20 18" fill="none" stroke="#555"><circle cx="9" cy="9" r="8" /><path d="M10 9h9" stroke="#222" strokeWidth="1.500" /><rect x="6.500" y="7.500" width="4" height="3" fill="#eee" stroke="#222" /></svg>
              </GlyphButton>
              <GlyphButton aria-label="Object properties"><Ring /></GlyphButton>
              <LayerButton><Swatch /><span>Default</span></LayerButton>
            </LayerGroup>
            <Push>
              <SideToggle aria-label="Right sidebar">
                <svg width="20" height="20"><rect x="1" y="2" width="17" height="17" fill="#fff" stroke="url(#active)" strokeWidth="1.500" /><rect x="13" y="2" width="6" height="17" fill="url(#active)" /></svg>
              </SideToggle>
            </Push>
          </ToolRow>
        </TitleBar>

        <Body>
          <Column>
            <Strip />
            <CommandInput placeholder="Command" aria-label="Command" />
            <Palette>
              {tools.map(([label, menu, art], i) => (
                <ToolButton key={label} aria-label={label} $on={i === 3}>
                  <svg width="28" height="28" viewBox="0 0 28 28">
                    {art}
                    {menu && <path d="M20.500 21.500h5l-2.500 4.500z" fill="#333" />}
                  </svg>
                </ToolButton>
              ))}
            </Palette>
            <Osnap>
              <OptionGroup $gap={5}>
                <Option><Radio name="mode" defaultChecked />Persistent</Option>
                <Option><Radio name="mode" />One shot</Option>
              </OptionGroup>
              <OptionGroup $gap={17}>
                {snaps.map(([name, on, off]) => (
                  <Option key={name} $off={off}><Check defaultChecked={on} disabled={off} />{name}</Option>
                ))}
              </OptionGroup>
              <Option><Check />Disable all</Option>
            </Osnap>
          </Column>

          <Column>
            <ViewStrip>
              <ViewIcons>
                <GlyphButton aria-label="Four viewports"><GridIcon /></GlyphButton>
                <GlyphButton aria-label="Single viewport">
                  <svg width="18" height="17"><rect x=".5" y=".5" width="17" height="16" fill="#fff" stroke="#9cc4ff" /><path d="M0 .5h5" stroke="#44f" strokeWidth="2" /></svg>
                </GlyphButton>
              </ViewIcons>
              <Divider /><ViewTab>Perspective</ViewTab>
              <Divider /><ViewTab>Top</ViewTab>
              <Divider /><ViewTab $on>Front</ViewTab>
              <Divider /><ViewTab>Right</ViewTab>
            </ViewStrip>
            <Viewport>
              <Scene />
              <ViewLabel>Front</ViewLabel>
            </Viewport>
          </Column>

          <RightColumn>
            <IconStrip><PanelIcons active="layers" /></IconStrip>
            <LayerList>
              <LayerTable>
                <colgroup>
                  <col style={{ width: 167 }} /><col style={{ width: 22 }} /><col style={{ width: 22 }} /><col style={{ width: 22 }} /><col style={{ width: 28 }} /><col style={{ width: 22 }} /><col />
                </colgroup>
                <thead>
                  <tr><th>Name</th><th /><th /><th /><th /><th /><th>Material Library</th></tr>
                </thead>
                <tbody>
                  <tr>
                    <td>Default</td>
                    <td><svg width="14" height="14"><circle cx="7" cy="7" r="6" fill="#a7d0f7" stroke="#3f6294" /><circle cx="7" cy="7" r="2" fill="#101c38" /></svg></td>
                    <td><svg width="12" height="15" viewBox="0 0 12 15"><path d="M2 5a4 4 0 0 1 8 0q0 2-2 5H4Q2 7 2 5z" fill="#fff6d8" stroke="#e3d5a8" /><path d="M4 10h4v3H4z" fill="#ccc" /></svg></td>
                    <td><svg width="14" height="14" viewBox="0 0 14 14"><path d="M7 7V4q0-2 2.500-2T12 4v3" fill="none" stroke="#aaa" strokeWidth="1.500" /><rect x="1" y="6" width="8" height="7" rx="1" fill="#e3bd8c" stroke="#c79a63" /></svg></td>
                    <td><Swatch /></td>
                    <td /><td />
                  </tr>
                </tbody>
              </LayerTable>
            </LayerList>
            <ScrollTrack><ScrollThumb /></ScrollTrack>
            <AddRow>
              <AddButton aria-label="Add layer">+</AddButton>
              <AddButton aria-label="Remove layer">−</AddButton>
            </AddRow>
            <IconStrip><PanelIcons active="object" /></IconStrip>
            <Inspector>
              <Box>
                <Segments>
                  <Segment $on>Object</Segment>
                  <Segment>Details</Segment>
                </Segments>
                <FieldRow $h={22}><FieldLabel as="span">Object type:</FieldLabel>curve</FieldRow>
                <FieldRow><FieldLabel htmlFor="name">Name:</FieldLabel><TextBox id="name" /></FieldRow>
                {selects.map(([label, value, w, well]) => (
                  <FieldRow key={label}>
                    <FieldLabel htmlFor={label}>{label}</FieldLabel>
                    <Select id={label} value={value} w={w} />
                    {well && <ColorWell aria-label={`${label} swatch`} />}
                  </FieldRow>
                ))}
                <FieldRow><FieldLabel htmlFor="mesh">Custom Mesh:</FieldLabel><Check id="mesh" /><PushButton $w={91} disabled>Adjust Settings</PushButton></FieldRow>
                <FieldRow $h={21}>
                  <FieldLabel htmlFor="iso" $off>Show isocurve:</FieldLabel>
                  <Check id="iso" defaultChecked disabled />
                  <TextBox $w={35} defaultValue="1" disabled aria-label="Isocurve density" />
                  <Stepper disabled aria-label="Step"><Arrows tone="#777" /></Stepper>
                </FieldRow>
                <FieldRow $h={27}><FieldLabel as="span" /><PushButton $w={56}>Match...</PushButton></FieldRow>
              </Box>
              <HelpButton aria-label="Help">?</HelpButton>
            </Inspector>
          </RightColumn>
        </Body>

        <StatusBar>
          <svg width="10" height="11" stroke="#555"><path d="M0 1.500h10M0 4.500h10M0 7.500h10M0 10.500h10" /></svg>
          <StatusText>Command:  _MeshOutline</StatusText>
          <Push>
            <SelectWrap $w={65} $round>
              <select aria-label="Plane" defaultValue="CPlane"><option>CPlane</option></select>
              <Arrows tone="#777" />
            </SelectWrap>
          </Push>
          <Coords><span>X: -19.319</span><span>Y: 43.703</span><span>Z: 0.000</span></Coords>
        </StatusBar>
      </Window>
    </>
  );
}
